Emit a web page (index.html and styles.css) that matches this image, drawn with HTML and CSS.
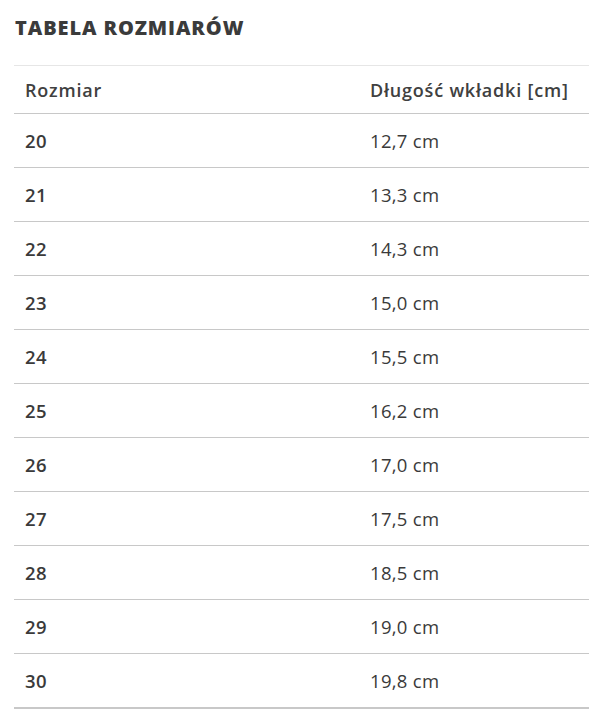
FILE: index.html
```html
<!DOCTYPE html>
<html lang="pl">
<head>
<meta charset="utf-8">
<link rel="stylesheet" href="styles.css">
</head>
<body>
<div class="wrap">
  <h2 class="title">TABELA ROZMIARÓW</h2>
  <table class="sizes">
    <colgroup><col class="c1"><col class="c2"></colgroup>
    <thead>
      <tr><th>Rozmiar</th><th>Długość wkładki [cm]</th></tr>
    </thead>
    <tbody>
      <tr><td class="size">20</td><td>12,7 cm</td></tr>
      <tr><td class="size">21</td><td>13,3 cm</td></tr>
      <tr><td class="size">22</td><td>14,3 cm</td></tr>
      <tr><td class="size">23</td><td>15,0 cm</td></tr>
      <tr><td class="size">24</td><td>15,5 cm</td></tr>
      <tr><td class="size">25</td><td>16,2 cm</td></tr>
      <tr><td class="size">26</td><td>17,0 cm</td></tr>
      <tr><td class="size">27</td><td>17,5 cm</td></tr>
      <tr><td class="size">28</td><td>18,5 cm</td></tr>
      <tr><td class="size">29</td><td>19,0 cm</td></tr>
      <tr><td class="size">30</td><td>19,8 cm</td></tr>
    </tbody>
  </table>
</div>
</body>
</html>
```
FILE: styles.css
```css
html, body { margin: 0; padding: 0; background: #fff; }
body { font-family: "Open Sans", "Lato", sans-serif; color: #3a3a3a; }
.wrap { padding: 14px 19px 0 14px; }
.title {
  margin: 0 0 0 1px;
  font-size: 20px;
  font-weight: 800;
  line-height: 28px;
  letter-spacing: 0.9px;
  color: #3b3b3b;
}
.sizes {
  margin-top: 23px;
  width: 575px;
  table-layout: fixed;
  border-collapse: collapse;
  border-top: 1px solid #e6e6e6;
  border-bottom: 2px solid #c8c8c8;
}
.c1 { width: 345px; }
.sizes th, .sizes td {
  text-align: left;
  padding: 0 11px;
}
.sizes th {
  height: 47px;
  font-size: 18px;
  font-weight: 600;
  letter-spacing: 0.8px;
  color: #404040;
  border-bottom: 1px solid #c8c8c8;
  vertical-align: middle;
}
.sizes td {
  height: 53px;
  font-size: 18.5px;
  letter-spacing: 0.3px;
  border-bottom: 1px solid #c8c8c8;
  color: #3a3a3a;
}
.sizes tbody tr:last-child td { border-bottom: none; }
.sizes td.size { font-weight: 600; letter-spacing: 0.5px; }
```
